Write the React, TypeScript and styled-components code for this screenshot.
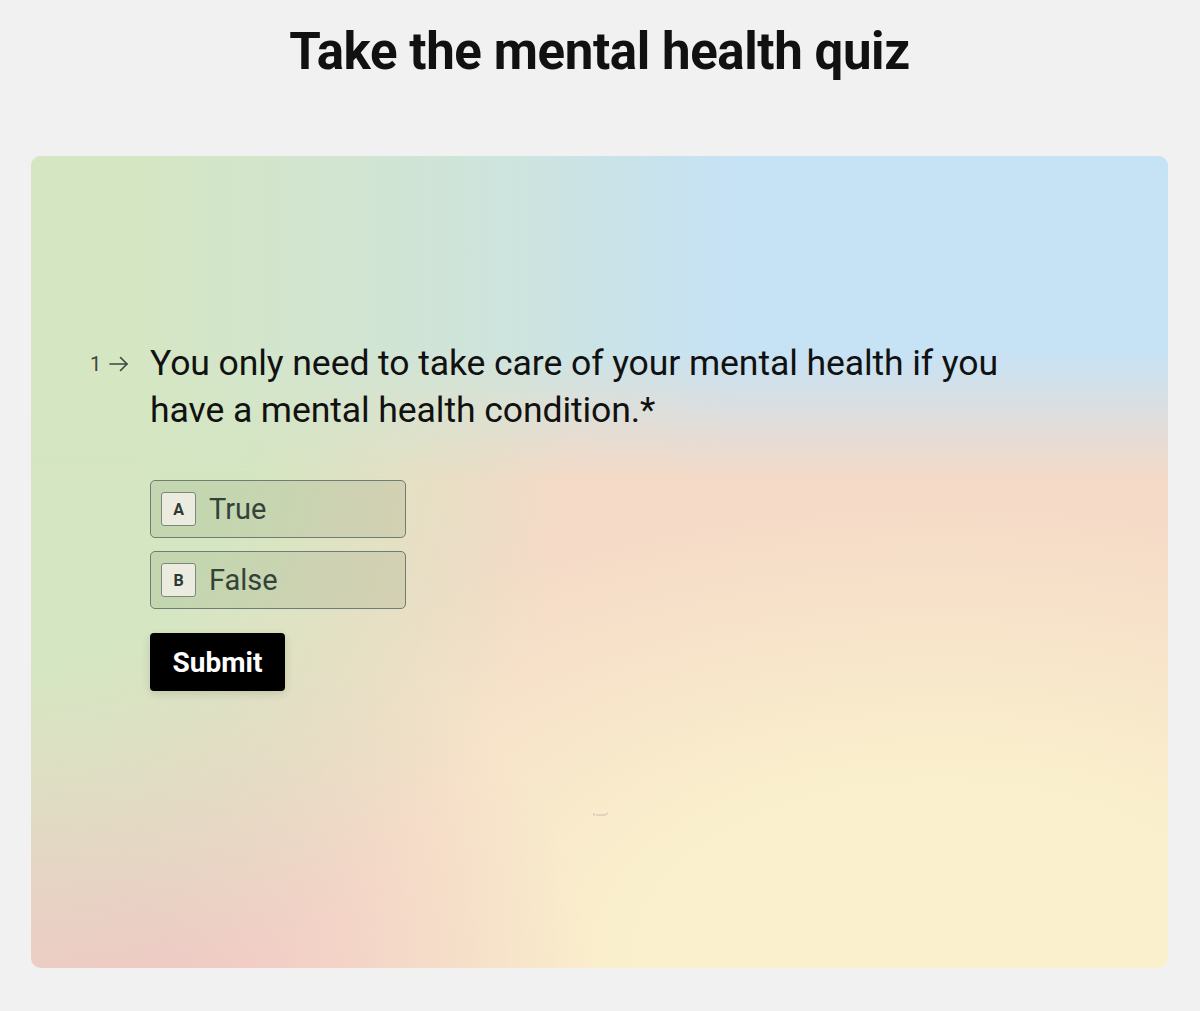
import React from 'react';
import styled, { createGlobalStyle } from 'styled-components';

const GlobalStyle = createGlobalStyle`
  body {
    margin: 0;
    background: #f1f1f1;
    font-family: Roboto, "Liberation Sans", Arial, sans-serif;
  }
`

const Page = styled.div`
  display: flex;
  flex-direction: column;
  align-items: center;
  padding: 21px 32px 43px 31px;
`

const Title = styled.h1`
  margin: 0 0 73px;
  font-size: 51px;
  line-height: 62px;
  font-weight: 700;
  color: #111;
  letter-spacing: -0.4px;
`

const Card = styled.div`
  position: relative;
  width: 100%;
  height: 812px;
  box-sizing: border-box;
  border-radius: 10px;
  overflow: hidden;
  padding: 184px 0 0 59px;
  background:
    radial-gradient(ellipse 540px 580px at 0% 34%, #d5e6c2 40%, rgba(213, 230, 194, 0) 100%),
    radial-gradient(ellipse 560px 400px at 0% 100%, #f0c9c5 25%, rgba(240, 201, 197, 0) 100%),
    radial-gradient(ellipse 820px 460px at 80% 98%, #faf0cd 36%, rgba(250, 240, 205, 0) 100%),
    #f5dac7;

  &::before {
    content: '';
    position: absolute;
    inset: 0;
    background: linear-gradient(90deg, #d5e6c2 8%, #cfe4d9 38%, #c6e2f5 62%);
    -webkit-mask-image: linear-gradient(180deg, #000 24%, rgba(0, 0, 0, 0) 40%);
    mask-image: linear-gradient(180deg, #000 24%, rgba(0, 0, 0, 0) 40%);
  }
`

const Content = styled.div`
  position: relative;
  display: flex;
`

const Counter = styled.div`
  width: 60px;
  flex: none;
  display: flex;
  align-items: center;
  gap: 8px;
  height: 48px;
  box-sizing: border-box;
  font-size: 20px;
  color: #3a463e;
`

const Body = styled.div`
  display: flex;
  flex-direction: column;
  align-items: flex-start;
`

const Question = styled.h2`
  margin: 0 0 46px;
  width: 900px;
  font-size: 35.6px;
  line-height: 47px;
  font-weight: 400;
  color: #111;
  letter-spacing: -0.1px;
`

const Options = styled.div`
  display: flex;
  flex-direction: column;
  gap: 13px;
  margin-bottom: 24px;
`

const Option = styled.button`
  display: flex;
  align-items: center;
  gap: 13px;
  width: 256px;
  height: 58px;
  box-sizing: border-box;
  padding: 0 10px;
  border: 1px solid #6e7e72;
  border-radius: 5px;
  background: rgba(85, 110, 60, 0.13);
  font-family: inherit;
  font-size: 29px;
  color: #33433a;
  cursor: pointer;
`

const Key = styled.span`
  display: flex;
  align-items: center;
  justify-content: center;
  width: 35px;
  height: 34px;
  box-sizing: border-box;
  border: 1px solid #7a887b;
  border-radius: 3px;
  background: #ebebe0;
  font-size: 16px;
  font-weight: 700;
  color: #2d3a33;
`

const Submit = styled.button`
  width: 135px;
  height: 58px;
  border: none;
  border-radius: 4px;
  background: #000;
  color: #fff;
  font-family: inherit;
  font-size: 28px;
  font-weight: 700;
  box-shadow: 0 3px 10px rgba(0, 0, 0, 0.12);
  cursor: pointer;
`

const Mark = styled.svg`
  position: absolute;
  left: 562px;
  top: 655px;
`

const Arrow = () => (
  <svg width="20" height="16" viewBox="0 0 20 16" fill="none" stroke="#3a463e" strokeWidth="1.6" strokeLinecap="round" strokeLinejoin="round">
    <path d="M1 8h17" />
    <path d="M11.5 1.5L18 8l-6.5 6.5" />
  </svg>
)

const answers = [
  { key: 'A', label: 'True' },
  { key: 'B', label: 'False' },
]

const App = () => {
  return (
    <>
      <GlobalStyle />
      <Page>
        <Title>Take the mental health quiz</Title>
        <Card>
          <Content>
            <Counter>
              <span>1</span>
              <Arrow />
            </Counter>
            <Body>
              <Question>
                You only need to take care of your mental health if you
                <br />
                have a mental health condition.*
              </Question>
              <Options>
                {answers.map((a) => (
                  <Option key={a.key}>
                    <Key>{a.key}</Key>
                    {a.label}
                  </Option>
                ))}
              </Options>
              <Submit>Submit</Submit>
            </Body>
          </Content>
          <Mark width="16" height="6" viewBox="0 0 16 6" fill="none" stroke="#b9b2a4" strokeWidth="0.8">
            <path d="M1 2v3M3 4h9l3-2" />
          </Mark>
        </Card>
      </Page>
    </>
  );
}

export default App;
